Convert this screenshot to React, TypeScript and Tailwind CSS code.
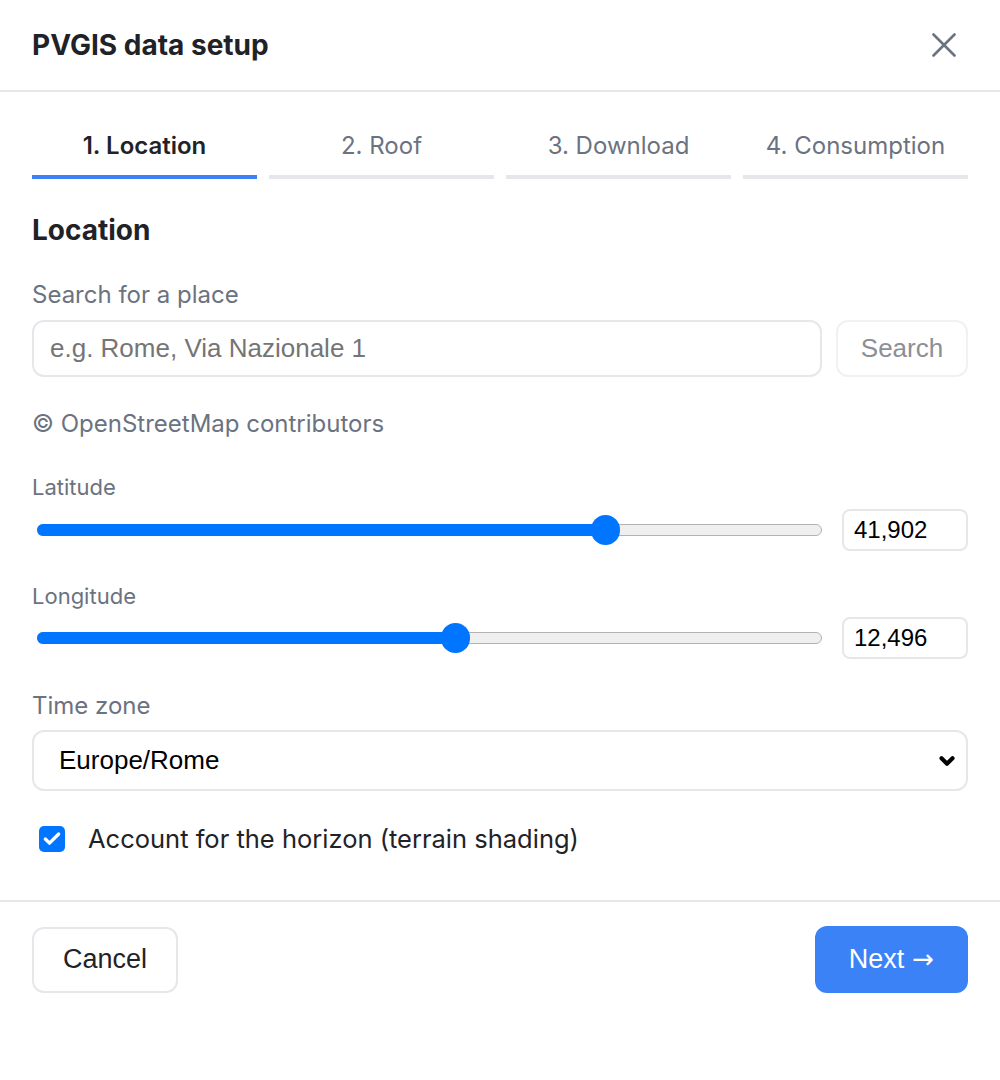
import { ChevronDown, Check } from "lucide-react"

const tabs = ["1. Location", "2. Roof", "3. Download", "4. Consumption"]

function Slider({ frac }: { frac: number }) {
  // thumb is 29px wide, track starts ~5px in from the row edge
  return (
    <div className="relative ml-[5px] h-[30px] flex-1">
      <div className="absolute left-0 right-0 top-[9px] h-[12px] rounded-full border-[1.5px] border-[#b2b2b2] bg-[#efefef]" />
      <div
        className="absolute left-0 top-[9px] h-[12px] rounded-full bg-[#0075ff]"
        style={{ width: `calc(${frac} * (100% - 29px) + 14px)` }}
      />
      <div
        className="absolute top-0 h-[30px] w-[29px] rounded-full bg-[#0075ff]"
        style={{ left: `calc(${frac} * (100% - 29px))` }}
      />
    </div>
  )
}

export default function App() {
  const sans = "font-['Inter','Noto_Sans',sans-serif]"
  const native = "font-['Liberation_Sans',Arial,sans-serif]"
  return (
    <div className={`min-h-[1080px] w-[1000px] bg-white ${sans}`}>
      <div className="flex h-[92px] items-center justify-between border-b-2 border-[#e5e7eb] px-8">
        <h1 className="text-[28px] font-bold text-[#1f2328]">PVGIS data setup</h1>
        <svg className="mr-[12px] size-[24px] text-[#6b7280]" viewBox="0 0 24 24" fill="none" stroke="currentColor" strokeWidth={2.6} strokeLinecap="round">
          <path d="M1.5 1.5l21 21M22.5 1.5l-21 21" />
        </svg>
      </div>

      <div className="px-8 pb-[46px] pt-[24px]">
        <div className="grid grid-cols-4 gap-3">
          {tabs.map((t, i) => (
            <div
              key={t}
              className={`border-b-4 pb-[14px] pt-[15px] text-center text-[24px] leading-[30px] ${
                i === 0
                  ? "border-[#3b82f6] font-semibold text-[#1f2328]"
                  : "border-[#e5e7eb] font-normal text-[#6b7280]"
              }`}
            >
              {t}
            </div>
          ))}
        </div>

        <h2 className="mt-[36px] text-[28px] font-bold leading-[30px] text-[#1f2328]">Location</h2>

        <div className="mt-[35px] text-[24px] leading-[30px] text-[#6b7280]">Search for a place</div>
        <div className="mt-[10px] flex gap-[14px]">
          <div
            className={`flex h-[57px] flex-1 items-center rounded-xl border-2 border-[#e5e7eb] px-[16px] text-[26px] text-[#757575] ${native}`}
          >
            e.g. Rome, Via Nazionale 1
          </div>
          <div
            className={`flex h-[57px] w-[132px] items-center justify-center rounded-xl border-2 border-[#f0f1f3] text-[26px] text-[#8b8f96] ${native}`}
          >
            Search
          </div>
        </div>

        <div className="mt-[32px] text-[24px] leading-[30px] text-[#6b7280]">© OpenStreetMap contributors</div>

        <div className="mt-[33px] text-[22px] leading-[30px] text-[#6b7280]">Latitude</div>
        <div className="mt-[7px] flex items-center gap-[20px]">
          <Slider frac={(41.902 + 90) / 180} />
          <div
            className={`flex h-[42px] w-[126px] items-center rounded-lg border-2 border-[#e5e7eb] px-[10px] text-[24px] text-black ${native}`}
          >
            41,902
          </div>
        </div>

        <div className="mt-[30px] text-[22px] leading-[30px] text-[#6b7280]">Longitude</div>
        <div className="mt-[6px] flex items-center gap-[20px]">
          <Slider frac={(12.496 + 180) / 360} />
          <div
            className={`flex h-[42px] w-[126px] items-center rounded-lg border-2 border-[#e5e7eb] px-[10px] text-[24px] text-black ${native}`}
          >
            12,496
          </div>
        </div>

        <div className="mt-[32px] text-[24px] leading-[30px] text-[#6b7280]">Time zone</div>
        <div
          className={`mt-[9px] flex h-[61px] items-center justify-between rounded-xl border-2 border-[#e5e7eb] pl-[25px] pr-[8px] text-[26px] text-black ${native}`}
        >
          <span>Europe/Rome</span>
          <ChevronDown className="size-[22px] text-black" strokeWidth={4.5} />
        </div>

        <div className="mt-[33px] flex items-center gap-[23px] pl-[7px]">
          <div className="flex size-[26px] items-center justify-center rounded-[5px] bg-[#0075ff]">
            <Check className="size-[20px] text-white" strokeWidth={4} />
          </div>
          <span className="text-[25.5px] leading-[30px] text-[#1f2328]">Account for the horizon (terrain shading)</span>
        </div>
      </div>

      <div className="flex items-center justify-between border-t-2 border-[#e5e7eb] px-8 pt-[24px]">
        <div
          className={`flex h-[66px] w-[146px] items-center justify-center rounded-xl border-2 border-[#e5e7eb] text-[27px] text-[#1f2328] ${native}`}
        >
          Cancel
        </div>
        <div
          className={`flex h-[67px] w-[153px] items-center justify-center gap-[8px] rounded-xl bg-[#3b82f6] text-[27px] text-white ${native}`}
        >
          <span>Next</span>
          <span className="font-['DejaVu_Sans',sans-serif] text-[26px]">→</span>
        </div>
      </div>
    </div>
  )
}
